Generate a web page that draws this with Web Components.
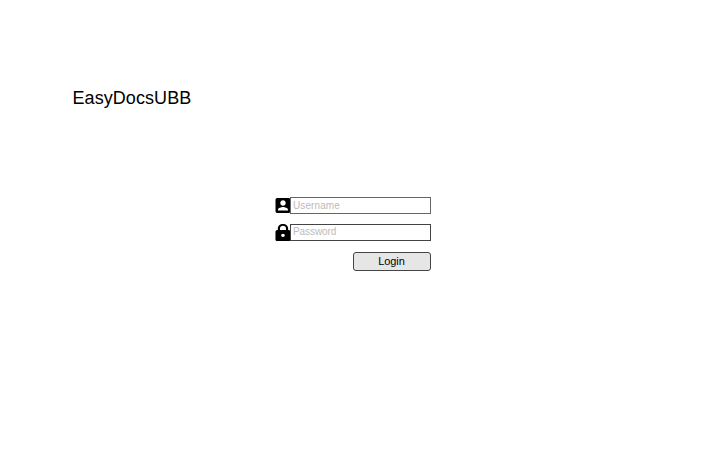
<!DOCTYPE html>
<html lang="en"><head><meta charset="utf-8"><title>EasyDocsUBB</title>
<style>html,body{margin:0;background:#fff;height:100%;overflow:hidden}body{font-family:"Liberation Sans",Arial,sans-serif;color:#000}</style></head><body>
<login-page>
<form-field placeholder="Username" style="--border:#666"><svg slot="icon" viewBox="2.400 3 18.600 18" width="15.500" height="15"><path d="M3 5v14a2 2 0 0 0 2 2h14c1.100 0 2-.9 2-2V5c0-1.100-.9-2-2-2H5a2 2 0 0 0-2 2zm12.300 4c0 1.820-1.480 3.300-3.300 3.300S8.700 10.820 8.700 9 10.180 5.700 12 5.700s3.300 1.480 3.300 3.300zM6 17c0-2 4-3.100 6-3.100s6 1.100 6 3.100v1H6v-1z"/></svg></form-field>
<form-field placeholder="Password" style="--spacing:-.08px;--line:13px"><svg slot="icon" viewBox="3.500 1 16.500 21" width="15.500" height="17" preserveAspectRatio="none"><path d="M18 8.500h-.5V6.500C17.500 3.240 15.260 1 12 1S6.500 3.240 6.500 6.500v2H6c-1.100 0-2 .9-2 2V20c0 1.100.9 2 2 2h12c1.100 0 2-.9 2-2v-9.500c0-1.100-.9-2-2-2zM12 17a2 2 0 1 1 0-4 2 2 0 0 1 0 4zm3.200-8.500H8.800v-2C8.800 4.600 10.100 3.300 12 3.300s3.200 1.300 3.200 3.200v2z"/></svg></form-field>
<action-button>Login</action-button>
</login-page>
<script>
customElements.define('form-field',class extends HTMLElement{connectedCallback(){this.attachShadow({mode:'open'}).innerHTML=`<style>:host{display:flex;height:17px;width:156px}.icon{width:15px;height:17px;display:flex;align-items:center}::slotted(svg){flex:none}.box{box-sizing:border-box;width:141px;height:17px;border:1px solid var(--border,#444);padding-left:2px;font-size:10px;line-height:var(--line,15px);color:#bbb;letter-spacing:var(--spacing,.1px)}</style><div class="icon"><slot name="icon"></slot></div><div class="box">${this.getAttribute('placeholder')}</div>`}});
customElements.define('action-button',class extends HTMLElement{connectedCallback(){this.attachShadow({mode:'open'}).innerHTML=`<style>:host{display:block;box-sizing:border-box;width:78px;height:19px;margin-top:1px;border:1px solid #444;border-radius:3px;background:#e6e6e6;font-size:11px;line-height:17px;text-align:center;letter-spacing:-.1px;padding-right:1px}</style><slot></slot>`}});
customElements.define('login-page',class extends HTMLElement{connectedCallback(){this.attachShadow({mode:'open'}).innerHTML=`<style>:host{display:block;padding-top:88px}h1{margin:0 0 88px 72.5px;font-size:18px;line-height:21px;font-weight:400;letter-spacing:.07px}.form{width:156px;margin-left:275px;display:flex;flex-direction:column;gap:10px;align-items:flex-end}</style><h1>EasyDocsUBB</h1><div class="form"><slot></slot></div>`}});
</script></body></html>
